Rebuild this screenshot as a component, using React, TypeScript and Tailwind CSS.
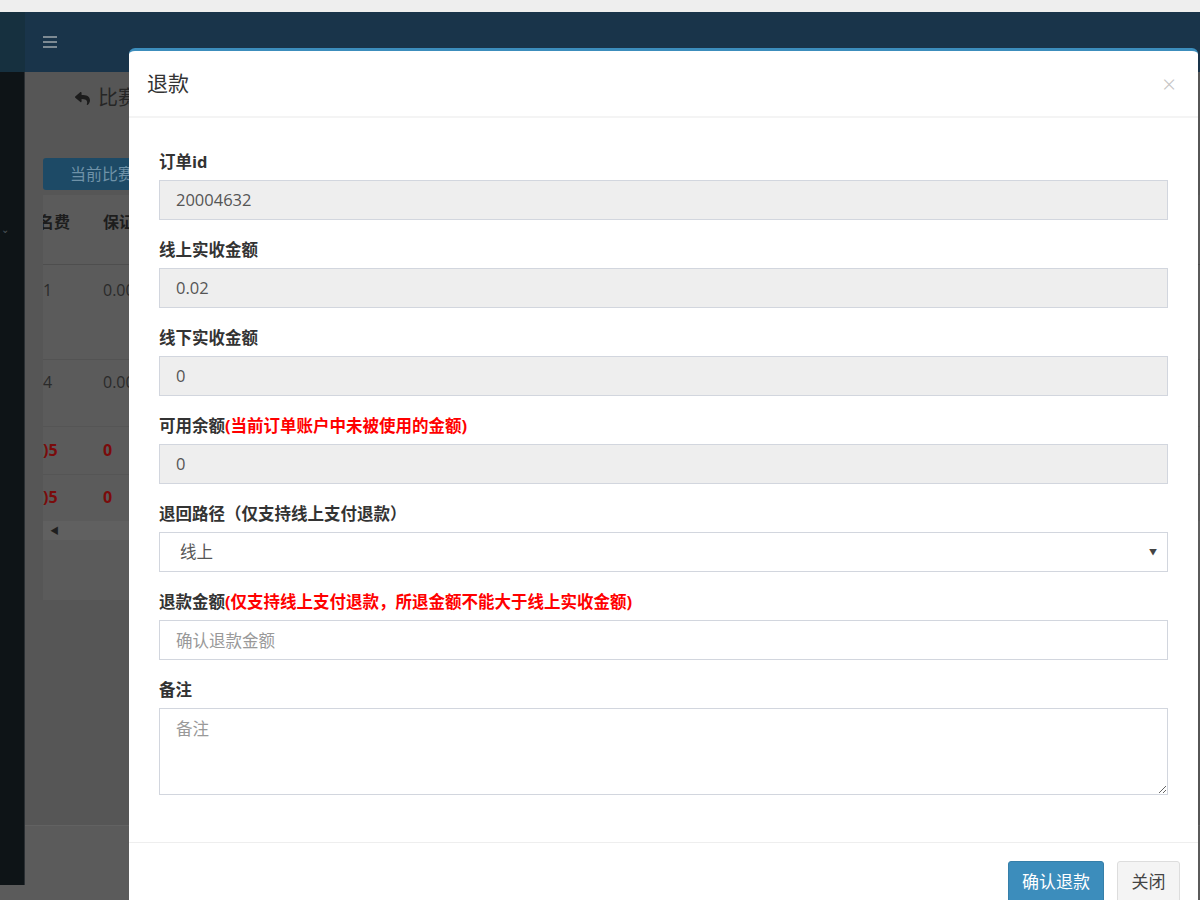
import { FaReply } from 'react-icons/fa';

const font = { fontFamily: '"Open Sans", "Noto Sans CJK SC", sans-serif' };

function Field({ label, note, children }: { label: string; note?: string; children: React.ReactNode }) {
  return (
    <div className="mb-[19px]">
      <label className="block h-[21px] mb-[8px] text-[16.5px] leading-[21px] font-bold text-[#333] whitespace-nowrap">
        {label}
        {note && <span className="text-[#ff0000]">{note}</span>}
      </label>
      {children}
    </div>
  );
}

function ReadOnly({ value }: { value: string }) {
  return (
    <div className="h-[40px] border border-[#d2d6de] bg-[#eeeeee] px-[16px] flex items-center text-[16.5px] text-[#555]">
      {value}
    </div>
  );
}

function Background() {
  return (
    <div className="w-[1200px] h-[900px] flex flex-col bg-[#565656]">
      <div className="h-[12px] bg-[#eeeeee]" />
      <div className="h-[60px] flex bg-[#19344a]">
        <div className="w-[25px] bg-[#16303f]" />
        <div className="pl-[18px] flex items-center">
          <div className="flex flex-col gap-[3px]">
            <span className="block w-[14px] h-[2px] bg-[#7d8a93]" />
            <span className="block w-[14px] h-[2px] bg-[#7d8a93]" />
            <span className="block w-[14px] h-[2px] bg-[#7d8a93]" />
          </div>
        </div>
      </div>
      <div className="flex flex-1">
        <div className="w-[25px] flex flex-col">
          <div className="h-[813px] bg-[#0e1417] border-r border-[#2a2f33] flex flex-col text-[#4d555a] text-[10px]">
            <div className="h-[150px]" />
            <div className="pl-[1px]">⌄</div>
          </div>
          <div className="flex-1 bg-[#5b5b5b]" />
        </div>
        <div className="flex-1 flex flex-col">
          <div className="h-[753px] pl-[18px]">
            <div className="h-[40px] flex items-end pl-[32px] gap-[8px] text-[20px] text-[#262626]">
              <FaReply className="text-[#1c1c1c] text-[15px] mb-[6px]" />
              <span className="leading-[28px]">比赛</span>
            </div>
            <div className="mt-[46px] w-[110px] h-[32px] rounded-[3px] bg-[#1d4a66] text-[#6f92a8] text-[16px] flex items-center pl-[27px]">
              当前比赛
            </div>
            <div className="mt-[5px] h-[405px] bg-[#5b5b5b] text-[16px] leading-[22px] overflow-hidden">
              <div className="h-[70px] pt-[16px] flex font-bold text-[#1d1d1d] border-b border-[#4e4e4e]">
                <span className="w-[60px] overflow-hidden whitespace-nowrap">
                  <span className="ml-[-5px]">名费</span>
                </span>
                <span>保证金</span>
              </div>
              <div className="h-[95px] pt-[14px] flex text-[#2a2a2a] border-b border-[#535353]">
                <span className="w-[60px]">1</span>
                <span>0.00</span>
              </div>
              <div className="h-[67px] pt-[11px] flex text-[#2a2a2a] border-b border-[#555]">
                <span className="w-[60px]">4</span>
                <span>0.00</span>
              </div>
              <div className="h-[48px] pt-[12px] flex font-bold text-[#7a0b0b] border-b border-[#555]">
                <span className="w-[60px]">)5</span>
                <span>0</span>
              </div>
              <div className="h-[46px] pt-[11px] flex font-bold text-[#7a0b0b]">
                <span className="w-[60px]">)5</span>
                <span>0</span>
              </div>
              <div className="h-[19px] bg-[#606060] flex items-center pl-[7px] text-[#1f1f1f] text-[9px]">◀</div>
            </div>
          </div>
          <div className="flex-1 border-t border-[#626262] bg-[#5b5b5b]" />
        </div>
      </div>
    </div>
  );
}

export default function App() {
  return (
    <div className="relative w-[1200px] h-[900px] overflow-hidden" style={font}>
      <Background />
      <div className="absolute left-[129px] top-[48px] w-[1069px] h-[880px] bg-white rounded-t-[6px] border-t-[3px] border-[#3c8dbc] flex flex-col">
        <div className="h-[67px] flex items-center justify-between pl-[18px] pr-[22px] border-b-2 border-[#f4f4f4]">
          <h4 className="text-[21px] text-[#333] font-normal">退款</h4>
          <span className="text-[24px] leading-none text-[#c4c4c4] font-light">×</span>
        </div>
        <div className="px-[30px] pt-[33px] pb-[47px]">
          <Field label="订单id">
            <ReadOnly value="20004632" />
          </Field>
          <Field label="线上实收金额">
            <ReadOnly value="0.02" />
          </Field>
          <Field label="线下实收金额">
            <ReadOnly value="0" />
          </Field>
          <Field label="可用余额" note="(当前订单账户中未被使用的金额)">
            <ReadOnly value="0" />
          </Field>
          <Field label="退回路径（仅支持线上支付退款）">
            <div className="h-[40px] border border-[#d2d6de] bg-white pl-[20px] pr-[10px] flex items-center justify-between text-[16.5px] text-[#555]">
              <span>线上</span>
              <span className="text-[8px] text-[#444]">▼</span>
            </div>
          </Field>
          <Field label="退款金额" note="(仅支持线上支付退款，所退金额不能大于线上实收金额)">
            <input
              className="block w-full h-[40px] border border-[#d2d6de] px-[16px] text-[16.5px] text-[#555] placeholder:text-[#999] outline-none"
              placeholder="确认退款金额"
            />
          </Field>
          <div>
            <label className="block h-[21px] mb-[8px] text-[16.5px] leading-[21px] font-bold text-[#333]">备注</label>
            <textarea
              className="block w-full h-[87px] border border-[#d2d6de] px-[16px] py-[8px] text-[16.5px] text-[#555] placeholder:text-[#999] outline-none"
              placeholder="备注"
            />
          </div>
        </div>
        <div className="border-t border-[#eeeeee] pt-[18px] pr-[18px] flex justify-end gap-[13px]">
          <button className="h-[42px] w-[96px] rounded-[3px] bg-[#3c8dbc] border border-[#367fa9] text-white text-[17px]">
            确认退款
          </button>
          <button className="h-[42px] w-[63px] rounded-[3px] bg-[#f4f4f4] border border-[#dddddd] text-[#444] text-[17px]">
            关闭
          </button>
        </div>
      </div>
    </div>
  );
}
